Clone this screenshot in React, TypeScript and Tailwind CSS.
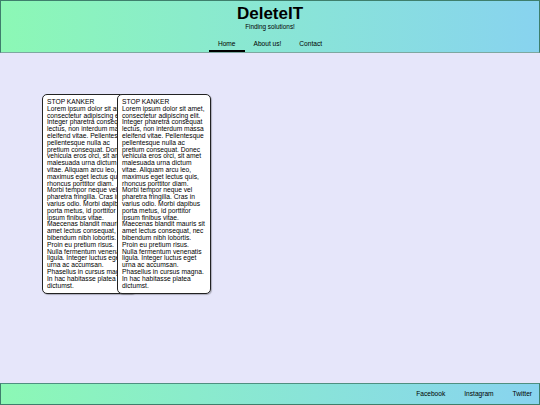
const LOREM =
  'Lorem ipsum dolor sit amet, consectetur adipiscing elit. Integer pharetra consequat lectus, non interdum massa eleifend vitae. Pellentesque pellentesque nulla ac pretium consequat. Donec vehicula eros orci, sit amet malesuada urna dictum vitae. Aliquam arcu leo, maximus eget lectus quis, rhoncus porttitor diam. Morbi tempor neque vel pharetra fringilla. Cras in varius odio. Morbi dapibus porta metus, id porttitor ipsum finibus vitae. Maecenas blandit mauris sit amet lectus consequat, nec bibendum nibh lobortis. Proin eu pretium risus. Nulla fermentum venenatis ligula. Integer luctus eget urna ac accumsan. Phasellus in cursus magna. In hac habitasse platea dictumst.'

const NAV = ['Home', 'About us!', 'Contact']
const SOCIAL = ['Facebook', 'Instagram', 'Twitter']

function Card({ className = '' }: { className?: string }) {
  return (
    <div
      className={`relative w-[93.6px] shrink-0 rounded-[5px] border border-[#222] bg-white px-[4px] pt-[4px] pb-[4px] text-[6.7px] leading-[6.8px] shadow-[1px_1px_1px_rgba(0,0,0,0.25)] ${className}`}
    >
      <p>STOP KANKER</p>
      <p>{LOREM}</p>
    </div>
  )
}

export default function App() {
  return (
    <div
      className="flex flex-col min-h-screen bg-[#e6e6fa] text-black text-[6.4px] leading-[7.36px]"
      style={{ fontFamily: '"Liberation Sans", Arial, sans-serif' }}
    >
      <header className="h-[53px] border border-[#3e7f6c] border-b-[#7da8a0] bg-gradient-to-r from-[#8cf8b5] to-[#88d3ef] flex flex-col items-center">
        <h1 className="mt-[3px] text-[17px] leading-[19px] font-bold">DeleteIT</h1>
        <p className="leading-[7px]">Finding solutions!</p>
        <nav className="mt-auto flex">
          {NAV.map((item, i) => (
            <a
              key={item}
              className={`px-[9px] pb-[2px] text-[6.6px] leading-[8px] border-b-2 ${i === 0 ? 'border-black' : 'border-transparent'}`}
            >
              {item}
            </a>
          ))}
        </nav>
      </header>

      <main className="flex-1 pl-[42px] pt-[41px]">
        <div className="flex items-start">
          <Card />
          <Card className="-ml-[18.6px]" />
        </div>
      </main>

      <footer className="h-[22px] border border-[#3e7f6c] border-t-[#4f8f80] bg-gradient-to-r from-[#8cf8b5] to-[#88d3ef] flex items-center justify-end gap-[19px] pr-[7px] text-[6.6px]">
        {SOCIAL.map((s) => (
          <a key={s}>{s}</a>
        ))}
      </footer>
    </div>
  )
}
